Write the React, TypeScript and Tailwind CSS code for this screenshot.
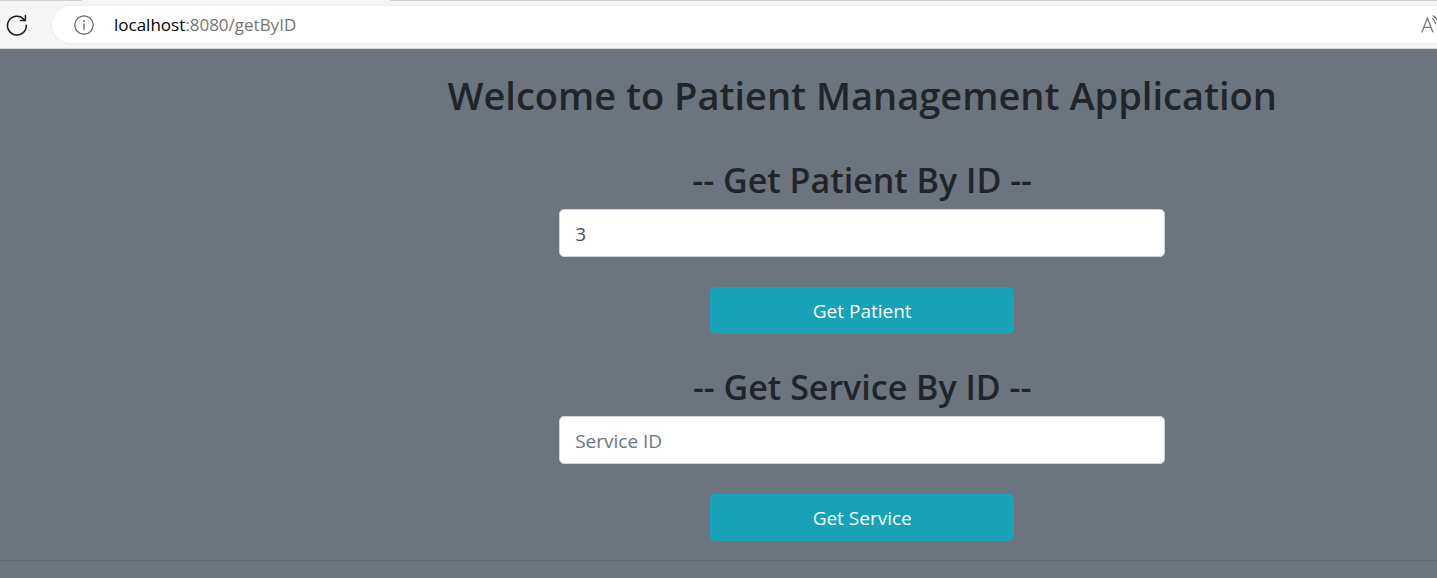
import React, { useState } from "react";

function ReloadIcon() {
  return (
    <svg width="22" height="22" viewBox="0 0 22 22" fill="none" stroke="#1b1b1b" strokeWidth="1.5" strokeLinecap="round" strokeLinejoin="round" aria-hidden="true">
      <path d="M20.3 11.2A9.4 9.4 0 1 1 17.9 5.3L19.3 6.4" />
      <path d="M19.4 1.6V6.6H14.4" />
    </svg>
  );
}

function InfoIcon() {
  return (
    <svg width="20" height="20" viewBox="0 0 20 20" fill="none" stroke="#6b6b6b" strokeWidth="1.3" strokeLinecap="round" aria-hidden="true">
      <circle cx="10" cy="10" r="9.2" />
      <path d="M10 9V14.5" />
      <circle cx="10" cy="6" r="0.9" fill="#6b6b6b" stroke="none" />
    </svg>
  );
}

function ReadAloudIcon() {
  return (
    <svg width="24" height="20" viewBox="0 0 24 20" fill="none" stroke="#757575" strokeWidth="1.3" strokeLinecap="round" aria-hidden="true">
      <path d="M1 17L6.4 3L11.8 17M3 12.4H9.8" />
      <path d="M11.6 3.6Q14 5.4 14.4 8.6" />
      <path d="M12.2 0.9Q17 3.8 17.6 8.6" />
    </svg>
  );
}

function BrowserBar() {
  return (
    <header className="flex h-[49px] flex-col overflow-hidden bg-[#f5f5f5]">
      <div className="flex h-px shrink-0">
        <div className="w-[82px] bg-[#d2d2d2]" />
        <div className="w-[308px] bg-[#f7f7f7]" />
        <div className="flex-1 bg-[#d2d2d2]" />
      </div>
      <div className="flex flex-1 items-center border-b border-[#d8d8d8]">
        <button type="button" aria-label="Reload" className="ml-1.5 mr-6 shrink-0">
          <ReloadIcon />
        </button>
        <div className="flex h-[37px] min-w-0 flex-1 items-center rounded-l-full bg-white pl-[22px] shadow-[0_0_3px_rgba(0,0,0,0.08)]">
          <span className="shrink-0">
            <InfoIcon />
          </span>
          <p className="ml-5 flex-1 truncate text-[17px] leading-6 text-[#757575]">
            <span className="text-black">localhost</span>:8080/getByID
          </p>
          <button type="button" aria-label="Read aloud" className="-mr-2 shrink-0">
            <ReadAloudIcon />
          </button>
        </div>
      </div>
    </header>
  );
}

type LookupProps = { id: string; title: string; placeholder: string; action: string; initial?: string };

function LookupForm({ id, title, placeholder, action, initial = "" }: LookupProps) {
  const [value, setValue] = useState(initial);
  return (
    <form className="flex w-full flex-col items-center" onSubmit={(e) => e.preventDefault()}>
      <h2 className="mb-2 text-[34px] leading-[42px] font-semibold">
        <label htmlFor={id}>{title}</label>
      </h2>
      <input
        id={id}
        type="text"
        value={value}
        placeholder={placeholder}
        onChange={(e) => setValue(e.target.value)}
        className="h-12 w-full max-w-[606px] rounded-[5px] border border-[#ced4da] bg-white px-[15px] pt-0.5 text-[19px] text-[#495057] placeholder:text-[#6c757d]"
      />
      <button type="submit" className="mt-[30px] h-[47px] w-[304px] max-w-full rounded-[5px] bg-[#17a2b8] pt-0.5 text-[19px] text-white">
        {action}
      </button>
    </form>
  );
}

export default function App() {
  return (
    <div className="flex min-h-screen flex-col overflow-x-hidden bg-[#6c757d] font-['Open_Sans','Noto_Sans',sans-serif] text-[#212529]">
      <BrowserBar />
      <main className="pt-[22px]">
        <div className="ml-[20%] flex flex-col items-center">
          <h1 className="text-center text-[38px] leading-[48px] font-semibold">Welcome to Patient Management Application</h1>
          <div className="mt-10 flex w-full flex-col items-center gap-8">
            <LookupForm id="patient-id" title="-- Get Patient By ID --" placeholder="Patient ID" action="Get Patient" initial="3" />
            <LookupForm id="service-id" title="-- Get Service By ID --" placeholder="Service ID" action="Get Service" />
          </div>
        </div>
        <hr className="mt-[19px] border-[#616970]" />
      </main>
    </div>
  );
}
